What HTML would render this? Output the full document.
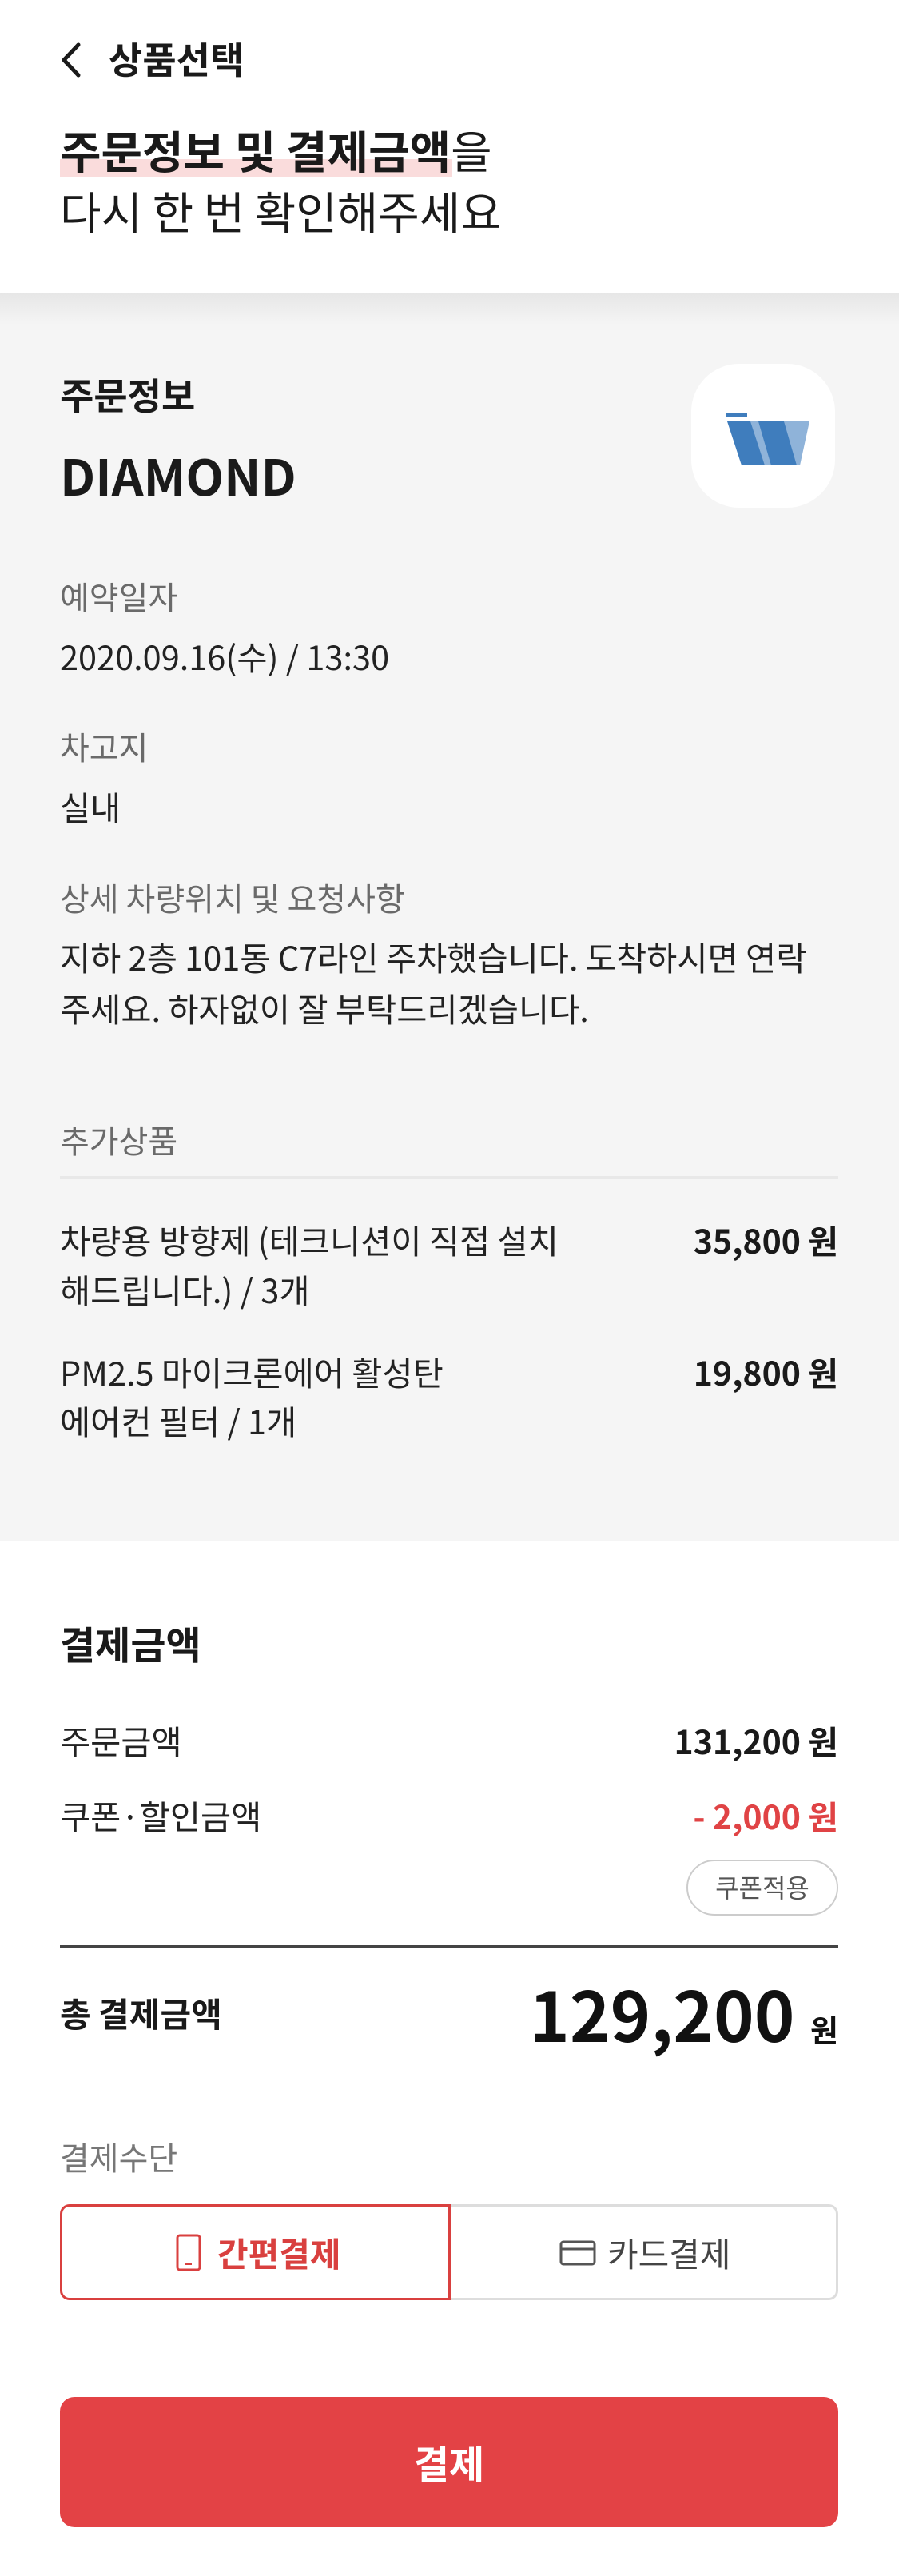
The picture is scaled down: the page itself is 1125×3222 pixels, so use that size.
<!DOCTYPE html>
<html><head><meta charset="utf-8"><style>
*{margin:0;padding:0;box-sizing:border-box}
body{width:1125px;height:3222px;background:#fff;font-family:"Noto Sans CJK KR","Liberation Sans",sans-serif;color:#1a1a1a;position:relative;overflow:hidden}
.a{position:absolute;white-space:nowrap;line-height:1}
.g{color:#6a6a6a}
.r{right:76px;text-align:right}
.t{font-size:41.5px;color:#222}
</style></head><body>
<svg class="a" style="left:72px;top:52px" width="34" height="46" viewBox="0 0 34 46"><path d="M26 4 L8 23 L26 42" fill="none" stroke="#1a1a1a" stroke-width="5" stroke-linecap="round" stroke-linejoin="round"/></svg>
<div class="a" style="left:136px;top:50px;font-size:46px;font-weight:bold">상품선택</div>
<div class="a" style="left:75px;top:199px;width:491px;height:23px;background:#fadcdc"></div>
<div class="a" style="left:75px;top:160px;font-size:56px;font-weight:bold">주문정보 및 결제금액<span style="font-weight:normal">을</span></div>
<div class="a" style="left:75px;top:236px;font-size:56px">다시 한 번 확인해주세요</div>

<div class="a" style="left:0;top:366px;width:1125px;height:1561px;background:#f5f5f5"></div>
<div class="a" style="left:0;top:366px;width:1125px;height:40px;background:linear-gradient(#e6e6e6,#f5f5f5)"></div>

<div class="a" style="left:75px;top:470px;font-size:46px;font-weight:bold">주문정보</div>
<div class="a" style="left:75px;top:562px;font-size:62px;font-weight:bold">DIAMOND</div>
<div class="a" style="left:865px;top:455px;width:180px;height:180px;background:#fff;border-radius:60px"></div>
<svg class="a" style="left:865px;top:455px" width="180" height="180" viewBox="0 0 180 180">
<rect x="43" y="62" width="27" height="5" fill="#3f7dbd"/>
<polygon points="116,72 148,72 136,127 124,127" fill="#8fb3d9"/>
<polygon points="68,72 90,72 106,127 86,127" fill="#8fb3d9"/>
<polygon points="45,72 74,72 92,127 63,127" fill="#3f7dbd"/>
<polygon points="84,72 116,72 132,127 100,127" fill="#3f7dbd"/>
</svg>

<div class="a g" style="left:75px;top:725px;font-size:40px">예약일자</div>
<div class="a t" style="left:75px;top:800px">2020.09.16(수) / 13:30</div>
<div class="a g" style="left:75px;top:913px;font-size:40px">차고지</div>
<div class="a t" style="left:75px;top:988px">실내</div>
<div class="a g" style="left:75px;top:1102px;font-size:40px">상세 차량위치 및 요청사항</div>
<div class="a t" style="left:75px;top:1176px">지하 2층 101동 C7라인 주차했습니다. 도착하시면 연락</div>
<div class="a t" style="left:75px;top:1240px">주세요. 하자없이 잘 부탁드리겠습니다.</div>
<div class="a g" style="left:75px;top:1405px;font-size:40px">추가상품</div>
<div class="a" style="left:75px;top:1471px;width:974px;height:4px;background:#e8e8e8"></div>
<div class="a t" style="left:75px;top:1530px">차량용 방향제 (테크니션이 직접 설치</div>
<div class="a t" style="left:75px;top:1592px">해드립니다.) / 3개</div>
<div class="a r" style="top:1530px;font-size:41px;font-weight:bold">35,800 원</div>
<div class="a t" style="left:75px;top:1695px">PM2.5 마이크론에어 활성탄</div>
<div class="a t" style="left:75px;top:1756px">에어컨 필터 / 1개</div>
<div class="a r" style="top:1695px;font-size:41px;font-weight:bold">19,800 원</div>

<div class="a" style="left:75px;top:2030px;font-size:48px;font-weight:bold">결제금액</div>
<div class="a t" style="left:75px;top:2156px">주문금액</div>
<div class="a r" style="top:2156px;font-size:41px;font-weight:bold">131,200 원</div>
<div class="a t" style="left:75px;top:2250px">쿠폰·할인금액</div>
<div class="a r" style="top:2250px;font-size:41px;font-weight:bold;color:#e04345">- 2,000 원</div>
<div class="a" style="left:859px;top:2326px;width:190px;height:70px;border:2px solid #ccc;border-radius:35px;font-size:32px;color:#555;text-align:center;line-height:64px">쿠폰적용</div>
<div class="a" style="left:75px;top:2433px;width:974px;height:3px;background:#444"></div>
<div class="a" style="left:75px;top:2497px;font-size:42px;font-weight:bold">총 결제금액</div>
<div class="a r" style="top:2474px;font-size:86px;font-weight:bold;color:#111">129,200 <span style="font-size:38px">원</span></div>
<div class="a" style="left:75px;top:2677px;font-size:40px;color:#777">결제수단</div>

<div class="a" style="left:561px;top:2757px;width:488px;height:120px;border:3px solid #ddd;border-left:none;border-radius:0 12px 12px 0"></div>
<div class="a" style="left:75px;top:2757px;width:489px;height:120px;border:3px solid #d9403f;border-radius:12px 0 0 12px"></div>
<svg class="a" style="left:220px;top:2794px" width="32" height="47" viewBox="0 0 32 47"><rect x="2" y="2" width="28" height="43" rx="3" fill="none" stroke="#d9403f" stroke-width="3"/><rect x="11" y="36" width="9" height="3" fill="#d9403f"/></svg>
<div class="a" style="left:272px;top:2797px;font-size:42px;font-weight:bold;color:#d9403f">간편결제</div>
<svg class="a" style="left:700px;top:2802px" width="46" height="32" viewBox="0 0 46 32"><rect x="2" y="2" width="42" height="28" rx="3" fill="none" stroke="#555" stroke-width="3"/><line x1="2" y1="11" x2="44" y2="11" stroke="#555" stroke-width="3"/></svg>
<div class="a" style="left:760px;top:2797px;font-size:42px;color:#444">카드결제</div>

<div class="a" style="left:75px;top:2998px;width:974px;height:163px;background:#e34245;border-radius:18px;color:#fff;font-size:48px;font-weight:bold;text-align:center;line-height:163px">결제</div>
</body></html>
